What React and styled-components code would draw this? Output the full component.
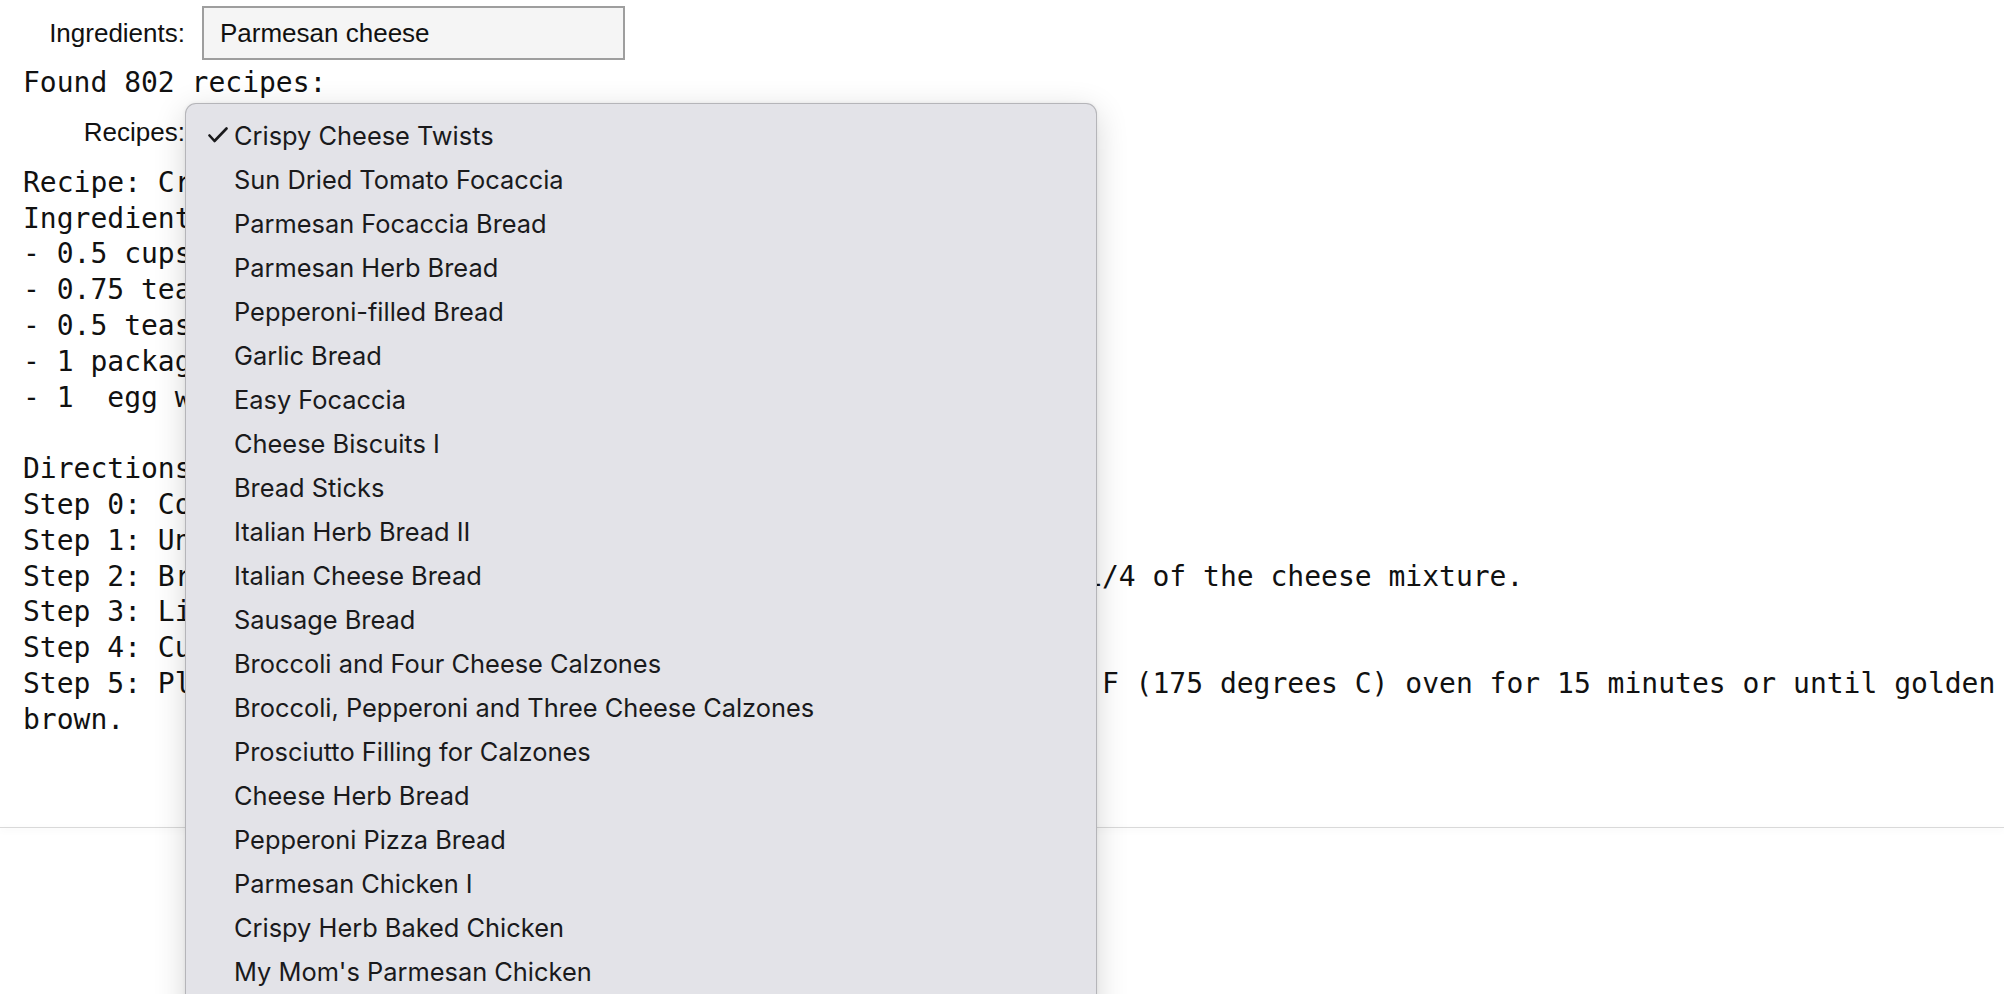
import React from "react";
import styled, { createGlobalStyle } from "styled-components";

const GlobalStyle = createGlobalStyle`
  html, body {
    margin: 0;
    padding: 0;
    background: #fff;
    overflow: hidden;
  }
  body {
    font-family: "Liberation Sans", Arial, sans-serif;
  }
`;

const recipes = [
  "Crispy Cheese Twists",
  "Sun Dried Tomato Focaccia",
  "Parmesan Focaccia Bread",
  "Parmesan Herb Bread",
  "Pepperoni-filled Bread",
  "Garlic Bread",
  "Easy Focaccia",
  "Cheese Biscuits I",
  "Bread Sticks",
  "Italian Herb Bread II",
  "Italian Cheese Bread",
  "Sausage Bread",
  "Broccoli and Four Cheese Calzones",
  "Broccoli, Pepperoni and Three Cheese Calzones",
  "Prosciutto Filling for Calzones",
  "Cheese Herb Bread",
  "Pepperoni Pizza Bread",
  "Parmesan Chicken I",
  "Crispy Herb Baked Chicken",
  "My Mom's Parmesan Chicken",
  "Chicken Parmigiana",
  "Baked Parmesan Tilapia",
];

const recipeText = `Recipe: Crispy Cheese Twists
Ingredients:
- 0.5 cups grated Parmesan cheese
- 0.75 teaspoon ground black pepper
- 0.5 teaspoon garlic powder
- 1 package frozen puff pastry, thawed
- 1  egg white, beaten

Directions:
Step 0: Combine Parmesan cheese, pepper and garlic powder.
Step 1: Unfold pastry sheets onto a lightly floured surface.
Step 2: Brush lightly with egg white. Sprinkle each sheet with 1/4 of the cheese mixture.
Step 3: Lightly press into pastry, turn over and repeat.
Step 4: Cut each sheet into 12 strips and twist.
Step 5: Place on baking sheets. Bake in a preheated 350 degrees F (175 degrees C) oven for 15 minutes or until golden brown.`;

const Page = styled.div`
  position: relative;
  height: 994px;
  overflow: hidden;
  padding-top: 6px;
  box-sizing: border-box;
`;

const WidgetRow = styled.div`
  display: flex;
  align-items: center;
  height: ${(p) => p.h}px;
  margin-bottom: ${(p) => p.gap || 0}px;
`;

const Label = styled.label`
  width: 185px;
  text-align: right;
  font-size: 26px;
  color: #111;
  white-space: nowrap;
`;

const TextInput = styled.input`
  margin-left: 17px;
  width: 423px;
  height: 54px;
  box-sizing: border-box;
  border: 2px solid #9e9e9e;
  background: #f5f5f5;
  padding: 0 16px;
  font: 26px "Liberation Sans", Arial, sans-serif;
  color: #111;
  outline: none;
`;

const SelectBox = styled.div`
  margin-left: 17px;
  width: 560px;
  height: 54px;
  box-sizing: border-box;
  border: 2px solid #9e9e9e;
  display: flex;
  align-items: center;
  padding: 0 16px;
  font-size: 26px;
`;

const Mono = styled.pre`
  margin: 0;
  padding: 0 0 ${(p) => p.pb || 0}px 23px;
  font-family: "DejaVu Sans Mono", monospace;
  font-size: 28px;
  line-height: 35.8px;
  white-space: pre-wrap;
  color: #111;
`;

const Divider = styled.div`
  height: 1px;
  background: #d9d9d9;
  box-shadow: 0 2px 6px rgba(0, 0, 0, 0.1);
`;

const Menu = styled.div`
  position: absolute;
  left: 185px;
  top: 103px;
  width: 912px;
  box-sizing: border-box;
  background: #e3e3e8;
  border: 1px solid rgba(0, 0, 0, 0.2);
  border-radius: 11px;
  padding: 9px 0;
  box-shadow: 0 8px 32px rgba(0, 0, 0, 0.16), 0 0 4px rgba(0, 0, 0, 0.06);
`;

const MenuItem = styled.div`
  display: flex;
  align-items: center;
  height: 44px;
  padding-left: 16px;
  font-family: Inter, "Liberation Sans", sans-serif;
  font-size: 25.4px;
  color: #1a1a1c;
  white-space: nowrap;
`;

const CheckSlot = styled.span`
  width: 32px;
  display: flex;
  align-items: center;
  padding-left: 6px;
  box-sizing: border-box;
`;

function Check() {
  return (
    <svg width="20" height="16" viewBox="0 0 20 16">
      <path
        d="M1.5 8.5 L6.5 14 L18.5 1.5"
        fill="none"
        stroke="#1a1a1c"
        strokeWidth="2.6"
        strokeLinecap="round"
        strokeLinejoin="round"
      />
    </svg>
  );
}

export default function App() {
  return (
    <Page>
      <GlobalStyle />
      <WidgetRow h={54} gap={5}>
        <Label>Ingredients:</Label>
        <TextInput defaultValue="Parmesan cheese" />
      </WidgetRow>
      <Mono>Found 802 recipes:</Mono>
      <WidgetRow h={64}>
        <Label>Recipes:</Label>
        <SelectBox>Crispy Cheese Twists</SelectBox>
      </WidgetRow>
      <Mono pb={89}>{recipeText}</Mono>
      <Divider />
      <Menu>
        {recipes.map((r, i) => (
          <MenuItem key={r}>
            <CheckSlot>{i === 0 ? <Check /> : null}</CheckSlot>
            {r}
          </MenuItem>
        ))}
      </Menu>
    </Page>
  );
}
